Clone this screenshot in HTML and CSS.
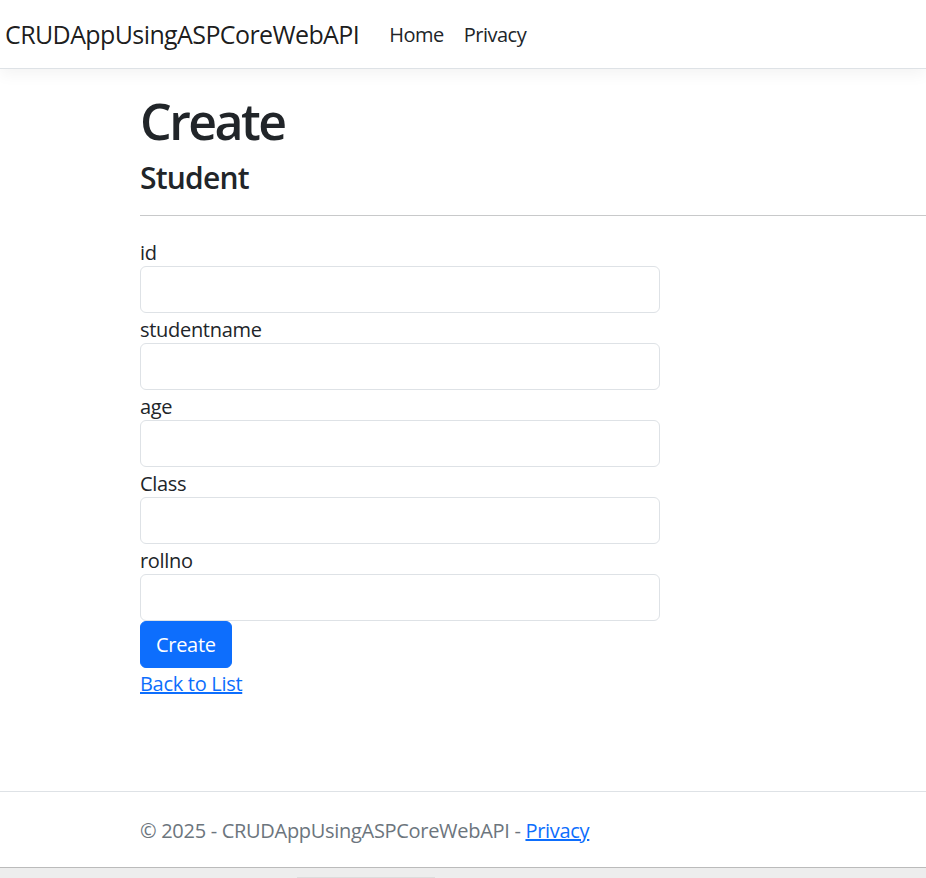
FILE: index.html
```html
<!DOCTYPE html>
<html lang="en">
<head>
<meta charset="utf-8">
<title>Create - CRUDAppUsingASPCoreWebAPI</title>
<link rel="stylesheet" href="styles.css">
</head>
<body>
<header class="navbar">
  <a class="brand" href="#">CRUDAppUsingASPCoreWebAPI</a>
  <nav class="nav">
    <a class="nav-link" href="#">Home</a>
    <a class="nav-link" href="#">Privacy</a>
  </nav>
</header>
<main class="container">
  <h1 class="title">Create</h1>
  <h4 class="subtitle">Student</h4>
  <hr class="divider">
  <form class="form-col">
    <div class="form-group">
      <label class="control-label" for="id">id</label>
      <input class="form-control" id="id" type="text">
    </div>
    <div class="form-group">
      <label class="control-label" for="studentname">studentname</label>
      <input class="form-control" id="studentname" type="text">
    </div>
    <div class="form-group">
      <label class="control-label" for="age">age</label>
      <input class="form-control" id="age" type="text">
    </div>
    <div class="form-group">
      <label class="control-label" for="Class">Class</label>
      <input class="form-control" id="Class" type="text">
    </div>
    <div class="form-group">
      <label class="control-label" for="rollno">rollno</label>
      <input class="form-control" id="rollno" type="text">
    </div>
    <div class="form-group">
      <button type="button" class="btn-primary">Create</button>
    </div>
  </form>
  <div class="back"><a class="link" href="#">Back to List</a></div>
</main>
<footer class="footer">
  <div class="footer-inner">&copy; 2025 - CRUDAppUsingASPCoreWebAPI - <a class="link" href="#">Privacy</a></div>
</footer>
<div class="hscroll"><div class="hscroll-thumb"></div></div>
</body>
</html>
```
FILE: styles.css
```css
* { box-sizing: border-box; }
html, body { margin: 0; padding: 0; }
body {
  height: 878px;
  display: flex;
  flex-direction: column;
  overflow: hidden;
  font-family: "Open Sans", "Noto Sans", sans-serif;
  font-size: 20px;
  line-height: 1.5;
  letter-spacing: -0.3px;
  color: #212529;
  background: #fff;
}
.navbar {
  flex: none;
  height: 69px;
  border-bottom: 1px solid #dee2e6;
  box-shadow: 0 5px 15px rgba(0,0,0,.05);
  display: flex;
  align-items: center;
  padding: 1px 0 0 5px;
  position: relative;
  z-index: 1;
}
.brand {
  font-size: 25px;
  color: rgba(0,0,0,.9);
  text-decoration: none;
  margin-right: 20px;
  line-height: 1.5;
  letter-spacing: -0.6px;
}
.nav { display: flex; }
.nav-link {
  color: #212529;
  text-decoration: none;
  padding: 10px 10px;
  font-size: 20px;
  letter-spacing: -0.5px;
}
.container {
  flex: 1;
  padding: 20px 0 0 140px;
}
.title {
  margin: 0 0 10px;
  font-size: 50px;
  font-weight: 600;
  line-height: 1.2;
  letter-spacing: -2.5px;
  padding-top: 2px;
  height: 60px;
}
.subtitle {
  margin: 0 0 10px;
  font-size: 30px;
  font-weight: 600;
  line-height: 1.2;
  letter-spacing: -0.8px;
  padding-top: 1px;
  height: 36px;
}
.divider {
  margin: 20px 0;
  border: 0;
  border-top: 1px solid #c8c9ca;
  height: 0;
}
.form-col { width: 520px; margin: 0; }
.form-group { display: flex; flex-direction: column; align-items: flex-start; }
.control-label { display: block; height: 30px; padding-top: 3px; line-height: 28px; }
.form-control {
  width: 100%;
  height: 47px;
  border: 1px solid #dee2e6;
  border-radius: 6px;
  font: inherit;
  letter-spacing: inherit;
  padding: 7px 15px;
  background: #fff;
}
.btn-primary {
  height: 47px;
  padding: 1px 15px 0;
  font: inherit;
  letter-spacing: inherit;
  color: #fff;
  background: #0d6efd;
  border: 1px solid #0d6efd;
  border-radius: 6px;
}
.back { height: 30px; padding-top: 2px; line-height: 28px; }
.link { color: #0d6efd; text-decoration: underline; }
.footer {
  flex: none;
  border-top: 1px solid #dee2e6;
  height: 76px;
  line-height: 77px;
  color: #6c757d;
  padding-left: 140px;
  white-space: nowrap;
}
.hscroll {
  flex: none;
  height: 11px;
  border-top: 1px solid #bbbbbb;
  background: #ededed;
  display: flex;
  align-items: flex-end;
  padding-left: 297px;
}
.hscroll-thumb {
  width: 138px;
  height: 1px;
  background: #dcdcdc;
}
```
